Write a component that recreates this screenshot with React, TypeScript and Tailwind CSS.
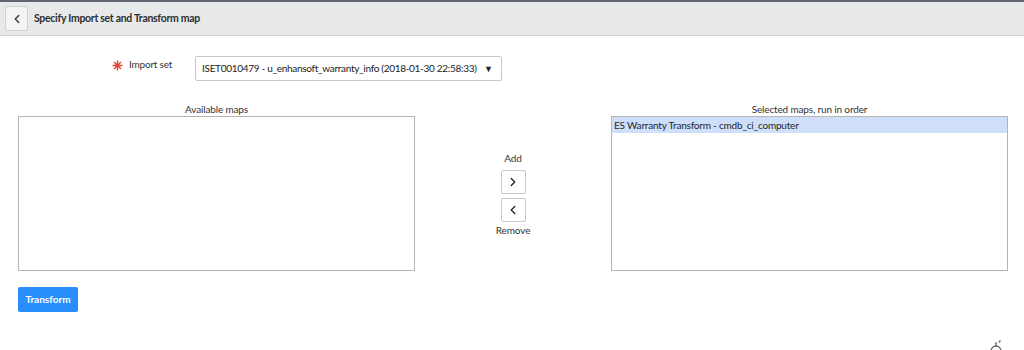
import { ChevronLeft, ChevronRight } from 'lucide-react';

const font = { fontFamily: 'Lato, sans-serif' };

function ListBox({ title, items }: { title: string; items: string[] }) {
  return (
    <div className="flex flex-col w-[397px]">
      <div className="text-center text-[10px] leading-[14px] tracking-[-0.15px] text-[#333]">{title}</div>
      <div className="h-[155px] border border-[#b5b5b5] bg-white">
        {items.map((item) => (
          <div key={item} className="h-[16px] bg-[#cfdffa] px-[2px] text-[10px] leading-[16px] tracking-[-0.2px] text-[#1f1f1f]">
            {item}
          </div>
        ))}
      </div>
    </div>
  );
}

export default function App() {
  return (
    <div className="w-[1024px] h-[350px] bg-white overflow-hidden relative" style={font}>
      <div className="h-[36px] bg-[#e7e9eb] border-t-2 border-[#5f666d] border-b border-b-[#d2d4d6] flex items-center px-[5px] gap-[6px]">
        <button className="w-[23px] h-[25px] bg-[#f3f4f5] border border-[#d0d2d4] rounded-[2px] flex items-center justify-center text-[#333]">
          <ChevronLeft size={14} strokeWidth={2.2} />
        </button>
        <span className="text-[10.5px] font-bold tracking-[-0.3px] text-[#2e2e2e]">Specify Import set and Transform map</span>
      </div>

      <div className="flex items-start mt-[20px] pl-[112px]">
        <div className="flex items-center w-[83px] pt-[1px]">
          <svg width="11" height="11" viewBox="0 0 11 11" stroke="#e0453a" strokeWidth="1.4" className="mr-[6px] mt-[2px]">
            <path d="M5.5 0.5v10M0.5 5.5h10M2 2l7 7M9 2l-7 7" />
          </svg>
          <span className="text-[10px] tracking-[-0.2px] text-[#333]">Import set</span>
        </div>
        <div className="w-[307px] h-[25px] border border-[#c8c8c8] rounded-[2px] flex items-center justify-between pl-[6px] pr-[8px]">
          <span className="text-[10px] tracking-[-0.3px] text-[#222] whitespace-nowrap">ISET0010479 - u_enhansoft_warranty_info (2018-01-30 22:58:33)</span>
          <span className="text-[9px] text-[#222]">▼</span>
        </div>
      </div>

      <div className="flex items-start px-[18px] mt-[21px]">
        <ListBox title="Available maps" items={[]} />
        <div className="flex-1 flex flex-col items-center pt-[49px] text-[10px] tracking-[-0.1px] text-[#333]">
          <span className="leading-[14px]">Add</span>
          <button className="mt-[5px] w-[25px] h-[24px] border border-[#c8c8c8] rounded-[2px] bg-white flex items-center justify-center text-[#222]">
            <ChevronRight size={14} strokeWidth={2.2} />
          </button>
          <button className="mt-[4px] w-[25px] h-[24px] border border-[#c8c8c8] rounded-[2px] bg-white flex items-center justify-center text-[#222]">
            <ChevronLeft size={14} strokeWidth={2.2} />
          </button>
          <span className="leading-[14px] mt-[1px]">Remove</span>
        </div>
        <div className="mr-[-2px]">
          <ListBox title="Selected maps, run in order" items={['ES Warranty Transform - cmdb_ci_computer']} />
        </div>
      </div>

      <div className="px-[18px] mt-[14px]">
        <button className="w-[60px] h-[25px] bg-[#278efc] rounded-[2px] text-white text-[10px] font-bold">Transform</button>
      </div>

      <svg className="absolute left-[988px] top-[338px]" width="16" height="16" viewBox="0 0 16 16" fill="none" stroke="#666" strokeWidth="1.3">
        <path d="M3 13a5 5 0 0 1 10 0" />
        <path d="M8 4v5" />
        <path d="M11 3l1 1.5M12.5 2.5l-1 1" />
      </svg>
    </div>
  );
}
